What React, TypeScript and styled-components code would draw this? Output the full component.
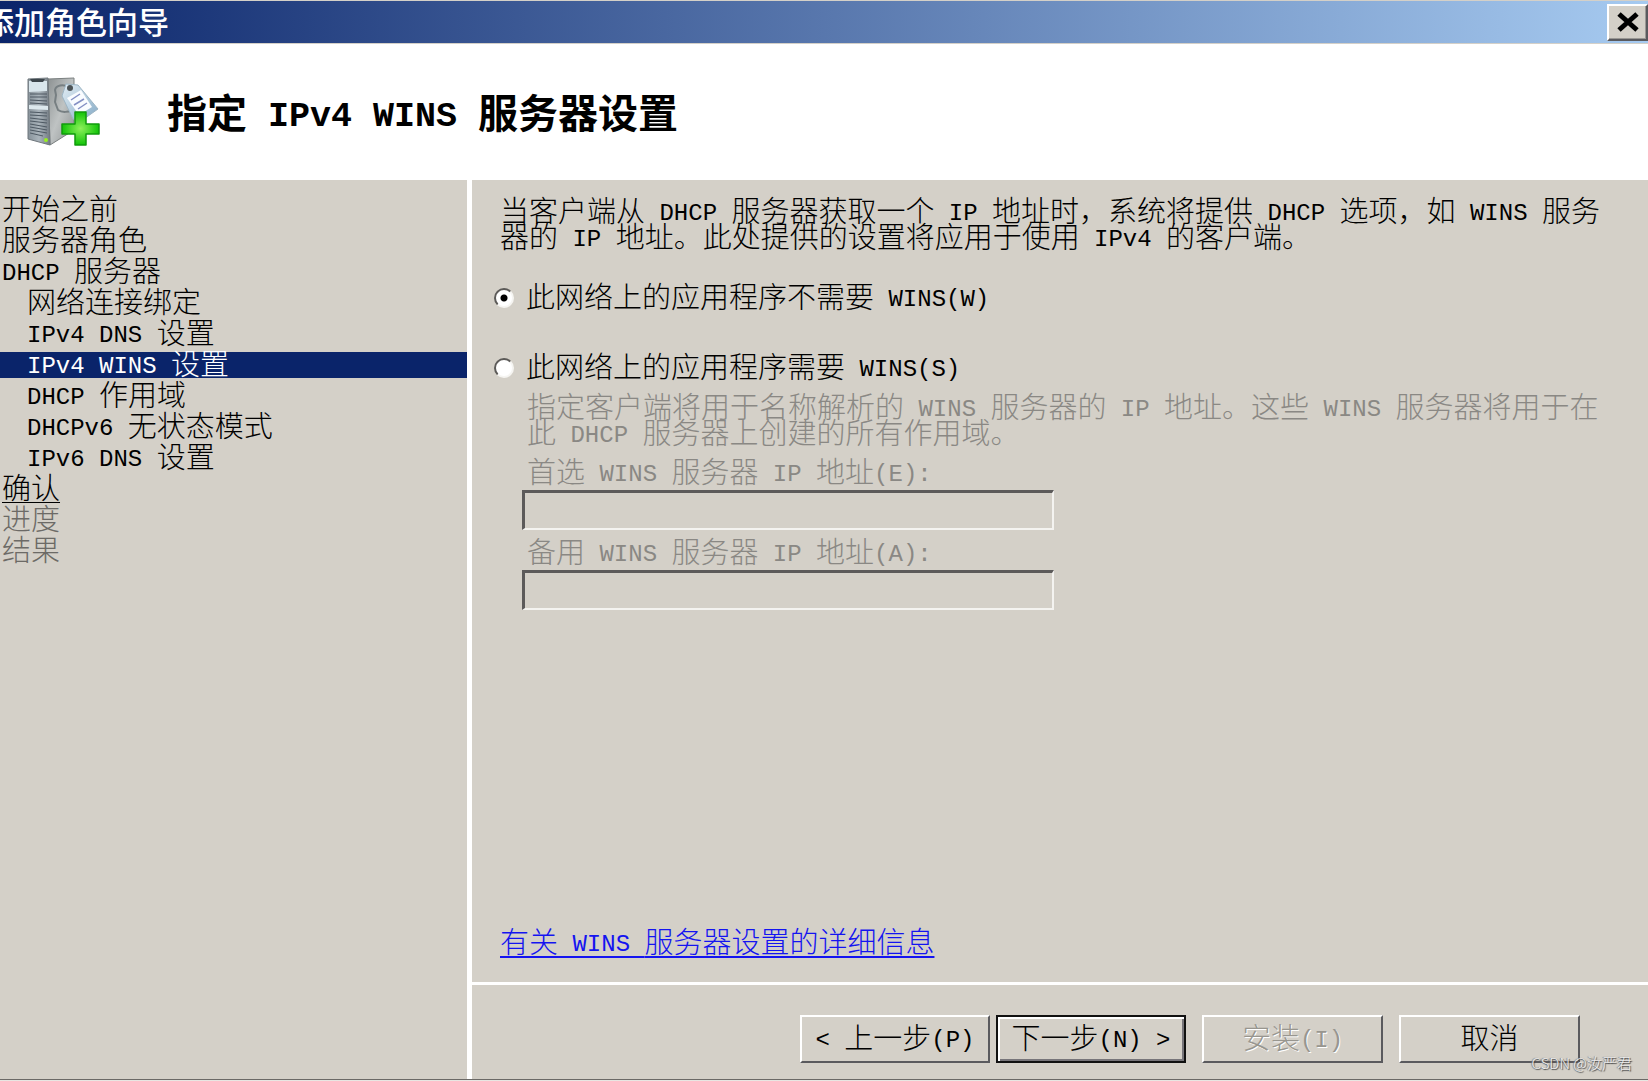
import { Fragment, useState } from "react";
import styled, { createGlobalStyle, css } from "styled-components";

const face = "#d4d0c8";
const navy = "#0a246a";

const GlobalStyle = createGlobalStyle`
  * { box-sizing: border-box; }
  body {
    margin: 0;
    background: ${face};
    color: #000;
    font-family: "Liberation Mono", "Noto Sans CJK SC", monospace;
    font-size: 29px;
    font-weight: 300;
    line-height: 26px;
  }
  button, input { font: inherit; color: inherit; }
`;

const Latin = styled.span`
  font-family: "Liberation Mono", monospace;
  font-size: 24px;
  line-height: 20px;
  vertical-align: 2px;
  white-space: pre-wrap;
`;

const HeadingLatin = styled(Latin)`
  font-size: 35px;
`;

/* Western runs are set at half the width of a Chinese character. */
function Mixed({ text, heading = false }: { text: string; heading?: boolean }) {
  const Run = heading ? HeadingLatin : Latin;
  return (
    <>
      {text.split(/([\x20-\x7e]+)/).map((part, i) =>
        i % 2 ? <Run key={i}>{part}</Run> : <Fragment key={i}>{part}</Fragment>
      )}
    </>
  );
}

const Window = styled.div`
  display: flex;
  flex-direction: column;
  min-height: 100vh;
  border-top: 1px solid ${face};
  border-bottom: 1px solid #e8e6e2;
  overflow: hidden;
`;

const TitleBar = styled.div`
  display: flex;
  align-items: center;
  justify-content: space-between;
  height: 43px;
  border-bottom: 1px solid ${face};
  background: linear-gradient(to right, ${navy}, #a6caf0);
`;

const WindowTitle = styled.span`
  align-self: flex-start;
  margin-left: -17px;
  color: #fff;
  font-family: "Noto Sans CJK SC", sans-serif;
  font-size: 31px;
  font-weight: 500;
  line-height: 40px;
`;

const raised = css`
  border: 2px solid;
  border-color: #fff #5a5a5e #5a5a5e #fff;
  background: ${face};
`;

const CloseButton = styled.button`
  ${raised}
  display: flex;
  align-items: center;
  justify-content: center;
  width: 41px;
  height: 37px;
  padding: 0;
  box-shadow: inset -1px -1px 0 #9a9894;
`;

const Header = styled.header`
  display: flex;
  align-items: center;
  gap: 65px;
  height: 136px;
  padding-left: 26px;
  background: #fff;
`;

const Heading = styled.h1`
  margin: 0;
  padding-bottom: 3px;
  font-family: "Noto Sans CJK SC", sans-serif;
  font-size: 40px;
  font-weight: 600;
  line-height: 48px;
`;

const Body = styled.div`
  display: flex;
  flex: 1;
  border-bottom: 1px solid #6b6966;
`;

const Sidebar = styled.nav`
  flex: 0 0 472px;
  padding-top: 17px;
  border-right: 5px solid #fff;
`;

const StepList = styled.ul`
  display: flex;
  flex-direction: column;
  gap: 5px;
  margin: 0;
  padding: 0;
  list-style: none;
`;

const Step = styled.a<{ $indent?: boolean; $current?: boolean; $underline?: boolean }>`
  display: block;
  height: 26px;
  padding-left: ${(p) => (p.$indent ? 27 : 2)}px;
  background: ${(p) => (p.$current ? navy : "transparent")};
  color: ${(p) => (p.$current ? "#fff" : "#000")};
  line-height: 32px;
  text-decoration: ${(p) => (p.$underline ? "underline 1px" : "none")};
  text-underline-offset: 3px;

  &:not([href]) { color: #6c6a66; }
`;

const Main = styled.main`
  display: flex;
  flex: 1;
  flex-direction: column;
  min-width: 0;
`;

const Content = styled.div`
  display: flex;
  flex: 1;
  flex-direction: column;
  align-items: flex-start;
  padding: 22px 24px 23px 28px;
`;

const Intro = styled.p`
  margin: 0;
`;

const Options = styled.div`
  display: flex;
  flex-direction: column;
  gap: 38px;
  margin: 28px 0 0 -6px;
`;

const RadioRow = styled.label`
  display: flex;
  align-items: center;
  gap: 12px;
`;

const RadioText = styled.span`
  padding-top: 6px;
`;

const Radio = styled.input`
  appearance: none;
  width: 20px;
  height: 20px;
  margin: 0;
  border: 2px solid;
  border-color: #5c5a58 #f6f5f2 #f6f5f2 #5c5a58;
  border-radius: 50%;
  background: #fff;

  &:checked {
    background: radial-gradient(circle, #000 0 3px, #fff 4px);
  }
`;

const Details = styled.fieldset`
  min-width: 0;
  margin: 14px 0 0 27px;
  padding: 0;
  border: 0;
  color: #8a8884;
`;

const Field = styled.div`
  display: flex;
  flex-direction: column;
  align-items: flex-start;
  gap: 1px;
  margin-top: 13px;
`;

const AddressInput = styled.input`
  width: 532px;
  max-width: 100%;
  height: 40px;
  margin-left: -5px;
  padding: 0 8px;
  border: solid;
  border-width: 3px 2px 2px 3px;
  border-color: #5c5a5a #f4f3f0 #f4f3f0 #5c5a5a;
  background: ${face};
`;

const HelpLink = styled.a`
  margin-top: auto;
  color: #1414f0;
  text-decoration: underline 2px;
  text-underline-offset: 3px;
`;

const Footer = styled.footer`
  display: flex;
  justify-content: flex-end;
  gap: 16px;
  height: 97px;
  padding: 30px 68px 0 0;
  border-top: 3px solid #fff;
`;

const ButtonPair = styled.div`
  display: flex;
  gap: 6px;
`;

const WizardButton = styled.button<{ $wide?: boolean; $primary?: boolean }>`
  ${raised}
  width: ${(p) => (p.$wide ? 190 : 181)}px;
  height: 48px;
  padding: 5px 0 0;
  white-space: nowrap;

  ${(p) =>
    p.$primary &&
    css`
      border-color: #111;
      box-shadow: inset 2px 2px 0 #fff, inset -2px -2px 0 #77757a;
    `}

  &:disabled {
    color: #98968f;
    text-shadow: 1px 1px 0 #fff;
  }
`;

const Watermark = styled.span`
  position: absolute;
  right: 16px;
  bottom: 8px;
  color: #eee;
  font-family: "Noto Sans CJK SC", sans-serif;
  font-size: 15px;
  line-height: 20px;
  text-shadow: 1px 1px 1px #444, -1px 0 1px #777;
  pointer-events: none;
`;

function ServerIcon() {
  return (
    <svg width="76" height="72" viewBox="0 0 76 72" aria-hidden="true">
      <defs>
        <linearGradient id="side" x1="0" y1="0" x2="1" y2="1">
          <stop offset="0" stopColor="#8c9192" />
          <stop offset=".5" stopColor="#bfc3c3" />
          <stop offset="1" stopColor="#8b9091" />
        </linearGradient>
        <linearGradient id="front" x1="0" y1="0" x2="1" y2="0">
          <stop offset="0" stopColor="#87929a" />
          <stop offset=".5" stopColor="#aab4bb" />
          <stop offset="1" stopColor="#737b83" />
        </linearGradient>
        <linearGradient id="tag" x1="0" y1="0" x2="1" y2="1">
          <stop offset="0" stopColor="#e2edf4" />
          <stop offset="1" stopColor="#84aac6" />
        </linearGradient>
        <radialGradient id="plus">
          <stop offset="0" stopColor="#8cf05a" />
          <stop offset="1" stopColor="#12c408" />
        </radialGradient>
      </defs>
      <path d="M22 3 48 2v52L24 69Z" fill="url(#side)" stroke="#7b8080" />
      <path d="M2 3 22 2l2 67-22-6Z" fill="url(#front)" stroke="#6f777c" />
      <path d="M3 5h18v10l-18 1Z" fill="#d9e6ec" />
      <path d="M4 3h15l-2 3H6Z" fill="#3d464c" />
      <path d="M3 29l19 1v4L3 33Z" fill="#dce8ed" />
      <path
        d="M4 18h17M4 21h17M4 24l17 1M4 27l17 1M4 36l17 1M4 39l17 1M4 42l17 2M4 45l17 2M4 48l17 3M4 51l17 3M4 54l17 3M4 57l13 3"
        stroke="#4e5963"
      />
      <circle cx="20" cy="64" r="2" fill="#98ef20" />
      <path d="M43 11c-6-3-13-2-14 3l1 5-1 7 3 8c4 3 11 2 15 0" fill="none" stroke="#777f82" strokeWidth="2" />
      <path d="M40 8 52 9l20 24-17 12-8-2L36 20Z" fill="url(#tag)" stroke="#9db5c4" />
      <path d="m41 22 14-8 11 17-13 8Z" fill="#f9fcff" />
      <path d="m45 24 9-6M48 29l10-6M52 33l9-6" stroke="#8490c4" strokeWidth="1.5" />
      <circle cx="44" cy="12" r="3" fill="#4c5356" />
      <path d="M49 36h11v12h13v10H60v11H49V58H36V48h13Z" fill="url(#plus)" stroke="#119b0c" strokeWidth="1.5" strokeLinejoin="round" />
    </svg>
  );
}

const steps = [
  { label: "开始之前" },
  { label: "服务器角色" },
  { label: "DHCP 服务器" },
  { label: "网络连接绑定", indent: true },
  { label: "IPv4 DNS 设置", indent: true },
  { label: "IPv4 WINS 设置", indent: true, current: true },
  { label: "DHCP 作用域", indent: true },
  { label: "DHCPv6 无状态模式", indent: true },
  { label: "IPv6 DNS 设置", indent: true },
  { label: "确认", underline: true },
  { label: "进度", disabled: true },
  { label: "结果", disabled: true },
];

export default function App() {
  const [useWins, setUseWins] = useState(false);

  return (
    <Window>
      <GlobalStyle />
      <TitleBar>
        <WindowTitle>添加角色向导</WindowTitle>
        <CloseButton type="button" aria-label="关闭">
          <svg width="24" height="22" viewBox="0 0 24 22" aria-hidden="true">
            <path d="M3 3 21 19M21 3 3 19" stroke="#000" strokeWidth="5" />
          </svg>
        </CloseButton>
      </TitleBar>

      <Header>
        <ServerIcon />
        <Heading>
          <Mixed heading text="指定 IPv4 WINS 服务器设置" />
        </Heading>
      </Header>

      <Body>
        <Sidebar>
          <StepList>
            {steps.map((s) => (
              <li key={s.label}>
                <Step
                  href={s.disabled ? undefined : "#"}
                  aria-current={s.current ? "step" : undefined}
                  $indent={s.indent}
                  $current={s.current}
                  $underline={s.underline}
                >
                  <Mixed text={s.label} />
                </Step>
              </li>
            ))}
          </StepList>
        </Sidebar>

        <Main>
          <Content>
            <Intro>
              <Mixed text="当客户端从 DHCP 服务器获取一个 IP 地址时，系统将提供 DHCP 选项，如 WINS 服务器的 IP 地址。此处提供的设置将应用于使用 IPv4 的客户端。" />
            </Intro>
            <Options>
              <RadioRow>
                <Radio type="radio" name="wins" checked={!useWins} onChange={() => setUseWins(false)} />
                <RadioText><Mixed text="此网络上的应用程序不需要 WINS(W)" /></RadioText>
              </RadioRow>
              <RadioRow>
                <Radio type="radio" name="wins" checked={useWins} onChange={() => setUseWins(true)} />
                <RadioText><Mixed text="此网络上的应用程序需要 WINS(S)" /></RadioText>
              </RadioRow>
            </Options>
            <Details disabled={!useWins}>
              <Intro>
                <Mixed text="指定客户端将用于名称解析的 WINS 服务器的 IP 地址。这些 WINS 服务器将用于在此 DHCP 服务器上创建的所有作用域。" />
              </Intro>
              <Field>
                <label htmlFor="preferred"><Mixed text="首选 WINS 服务器 IP 地址(E):" /></label>
                <AddressInput id="preferred" type="text" />
              </Field>
              <Field>
                <label htmlFor="alternate"><Mixed text="备用 WINS 服务器 IP 地址(A):" /></label>
                <AddressInput id="alternate" type="text" />
              </Field>
            </Details>
            <HelpLink href="#"><Mixed text="有关 WINS 服务器设置的详细信息" /></HelpLink>
          </Content>

          <Footer>
            <ButtonPair>
              <WizardButton type="button" $wide><Mixed text="< 上一步(P)" /></WizardButton>
              <WizardButton type="button" $wide $primary><Mixed text="下一步(N) >" /></WizardButton>
            </ButtonPair>
            <WizardButton type="button" disabled><Mixed text="安装(I)" /></WizardButton>
            <WizardButton type="button">取消</WizardButton>
          </Footer>
        </Main>
      </Body>
      <Watermark>CSDN @汝严君</Watermark>
    </Window>
  );
}
